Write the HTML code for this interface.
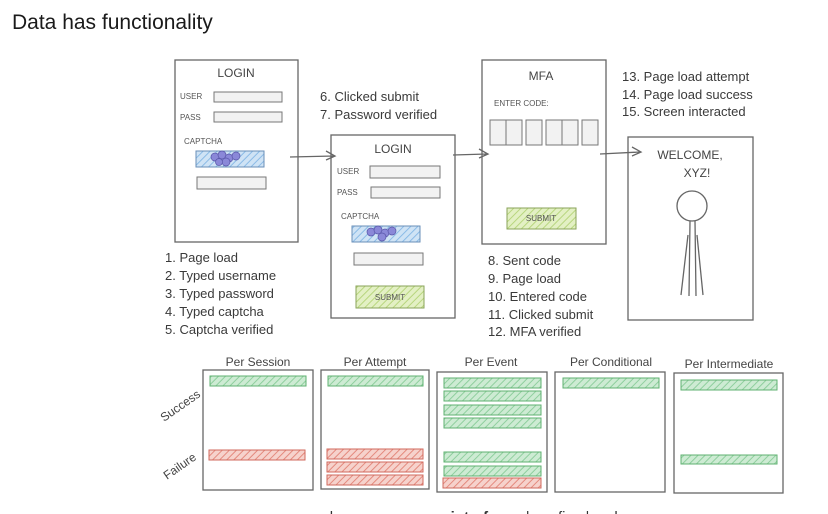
<!DOCTYPE html>
<html><head><meta charset="utf-8"><style>
html,body{margin:0;padding:0;background:#fff;width:828px;height:514px;overflow:hidden}
svg{display:block}
.t{font-family:"Liberation Sans",sans-serif;fill:#3a3a3a;font-size:13px}
.s{font-family:"Liberation Sans",sans-serif;fill:#555;font-size:8px}
.h{font-family:"Liberation Sans",sans-serif;fill:#444;font-size:12px}
.b{fill:none;stroke:#666;stroke-width:1.3}
.in{fill:#f2f2f2;stroke:#777;stroke-width:1}
</style></head><body>
<svg width="828" height="514" viewBox="0 0 828 514">
<defs>
<pattern id="g" width="5" height="5" patternUnits="userSpaceOnUse" patternTransform="rotate(45)"><rect width="5" height="5" fill="#cdebd3"/><line x1="0" y1="0" x2="0" y2="5" stroke="#8fcf9e" stroke-width="2"/></pattern>
<pattern id="r" width="5" height="5" patternUnits="userSpaceOnUse" patternTransform="rotate(45)"><rect width="5" height="5" fill="#f6d2cc"/><line x1="0" y1="0" x2="0" y2="5" stroke="#e48a7e" stroke-width="2"/></pattern>
<pattern id="y" width="5" height="5" patternUnits="userSpaceOnUse" patternTransform="rotate(45)"><rect width="5" height="5" fill="#e3f0c4"/><line x1="0" y1="0" x2="0" y2="5" stroke="#b8d67e" stroke-width="2"/></pattern>
<pattern id="bl" width="5" height="5" patternUnits="userSpaceOnUse" patternTransform="rotate(45)"><rect width="5" height="5" fill="#cfe3f5"/><line x1="0" y1="0" x2="0" y2="5" stroke="#8bbbe6" stroke-width="2"/></pattern>
</defs>
<text x="12" y="29" style="font-family:'Liberation Sans',sans-serif;font-size:21px;fill:#1a1a1a">Data has functionality</text>

<!-- Login 1 -->
<rect class="b" x="175" y="60" width="123" height="182"/>
<text class="h" x="236" y="77" text-anchor="middle">LOGIN</text>
<text class="s" x="180" y="99">USER</text><rect class="in" x="214" y="92" width="68" height="10"/>
<text class="s" x="180" y="120">PASS</text><rect class="in" x="214" y="112" width="68" height="10"/>
<text class="s" x="184" y="144">CAPTCHA</text>
<rect x="196" y="151" width="68" height="16" fill="url(#bl)" stroke="#6a8fb8"/>
<g fill="#8a88d8" stroke="#5855a8" stroke-width=".7"><circle cx="215" cy="157" r="4"/><circle cx="222" cy="155" r="4"/><circle cx="229" cy="158" r="4"/><circle cx="236" cy="156" r="4"/><circle cx="226" cy="162" r="4"/><circle cx="219" cy="162" r="3.5"/></g>
<rect class="in" x="197" y="177" width="69" height="12"/>
<path d="M290 157 L334 156 M326 151 L335 156 L326 160" class="b"/>

<text class="t" x="165" y="262">1. Page load</text>
<text class="t" x="165" y="280">2. Typed username</text>
<text class="t" x="165" y="298">3. Typed password</text>
<text class="t" x="165" y="316">4. Typed captcha</text>
<text class="t" x="165" y="334">5. Captcha verified</text>

<text class="t" x="320" y="101">6. Clicked submit</text>
<text class="t" x="320" y="119">7. Password verified</text>

<!-- Login 2 -->
<rect class="b" x="331" y="135" width="124" height="183"/>
<text class="h" x="393" y="153" text-anchor="middle">LOGIN</text>
<text class="s" x="337" y="174">USER</text><rect class="in" x="370" y="166" width="70" height="12"/>
<text class="s" x="337" y="195">PASS</text><rect class="in" x="371" y="187" width="69" height="11"/>
<text class="s" x="341" y="219">CAPTCHA</text>
<rect x="352" y="226" width="68" height="16" fill="url(#bl)" stroke="#6a8fb8"/>
<g fill="#8a88d8" stroke="#5855a8" stroke-width=".7"><circle cx="371" cy="232" r="4"/><circle cx="378" cy="230" r="4"/><circle cx="385" cy="233" r="4"/><circle cx="392" cy="231" r="4"/><circle cx="382" cy="237" r="4"/></g>
<rect class="in" x="354" y="253" width="69" height="12"/>
<rect x="356" y="286" width="68" height="22" fill="url(#y)" stroke="#8aa35a"/>
<text class="s" x="390" y="300" text-anchor="middle">SUBMIT</text>
<path d="M453 155 L487 154 M479 149 L488 154 L479 158" class="b"/>

<!-- MFA -->
<rect class="b" x="482" y="60" width="124" height="184"/>
<text class="h" x="541" y="80" text-anchor="middle">MFA</text>
<text class="s" x="494" y="106">ENTER CODE:</text>
<g class="in"><rect x="490" y="120" width="16" height="25"/><rect x="506" y="120" width="16" height="25"/><rect x="526" y="120" width="16" height="25"/><rect x="546" y="120" width="16" height="25"/><rect x="562" y="120" width="16" height="25"/><rect x="582" y="120" width="16" height="25"/></g>
<rect x="507" y="208" width="69" height="21" fill="url(#y)" stroke="#8aa35a"/>
<text class="s" x="541" y="221" text-anchor="middle">SUBMIT</text>
<path d="M600 154 L640 152 M632 147 L641 152 L632 156" class="b"/>

<text class="t" x="488" y="265">8. Sent code</text>
<text class="t" x="488" y="283">9. Page load</text>
<text class="t" x="488" y="301">10. Entered code</text>
<text class="t" x="488" y="319">11. Clicked submit</text>
<text class="t" x="488" y="336">12. MFA verified</text>

<text class="t" x="622" y="81">13. Page load attempt</text>
<text class="t" x="622" y="99">14. Page load success</text>
<text class="t" x="622" y="116">15. Screen interacted</text>

<!-- Welcome -->
<rect class="b" x="628" y="137" width="125" height="183"/>
<text class="h" x="690" y="159" text-anchor="middle">WELCOME,</text>
<text class="h" x="697" y="177" text-anchor="middle">XYZ!</text>
<circle cx="692" cy="206" r="15" class="b"/>
<path class="b" d="M690 221 L689 296 M695 221 L696 296 M688 235 L681 295 M697 235 L703 295"/>

<!-- Bottom -->
<g class="h" text-anchor="middle">
<text x="258" y="366">Per Session</text>
<text x="375" y="366">Per Attempt</text>
<text x="491" y="366">Per Event</text>
<text x="611" y="366">Per Conditional</text>
<text x="729" y="368">Per Intermediate</text>
</g>
<text class="h" transform="translate(164 422) rotate(-35)" x="0" y="0">Success</text>
<text class="h" transform="translate(167 480) rotate(-35)" x="0" y="0">Failure</text>
<rect class="b" x="203" y="370" width="110" height="120"/>
<rect class="b" x="321" y="370" width="108" height="119"/>
<rect class="b" x="437" y="372" width="110" height="120"/>
<rect class="b" x="555" y="372" width="110" height="120"/>
<rect class="b" x="674" y="373" width="109" height="120"/>
<g stroke-width="1">
<rect x="210" y="376" width="96" height="10" fill="url(#g)" stroke="#5fb070"/>
<rect x="209" y="450" width="96" height="10" fill="url(#r)" stroke="#d06a5e"/>
<rect x="328" y="376" width="95" height="10" fill="url(#g)" stroke="#5fb070"/>
<rect x="327" y="449" width="96" height="10" fill="url(#r)" stroke="#d06a5e"/>
<rect x="327" y="462" width="96" height="10" fill="url(#r)" stroke="#d06a5e"/>
<rect x="327" y="475" width="96" height="10" fill="url(#r)" stroke="#d06a5e"/>
<rect x="444" y="378" width="97" height="10" fill="url(#g)" stroke="#5fb070"/>
<rect x="444" y="391" width="97" height="10" fill="url(#g)" stroke="#5fb070"/>
<rect x="444" y="405" width="97" height="10" fill="url(#g)" stroke="#5fb070"/>
<rect x="444" y="418" width="97" height="10" fill="url(#g)" stroke="#5fb070"/>
<rect x="444" y="452" width="97" height="10" fill="url(#g)" stroke="#5fb070"/>
<rect x="444" y="466" width="97" height="10" fill="url(#g)" stroke="#5fb070"/>
<rect x="443" y="478" width="98" height="10" fill="url(#r)" stroke="#d06a5e"/>
<rect x="563" y="378" width="96" height="10" fill="url(#g)" stroke="#5fb070"/>
<rect x="681" y="380" width="96" height="10" fill="url(#g)" stroke="#5fb070"/>
<rect x="681" y="455" width="96" height="9" fill="url(#g)" stroke="#5fb070"/>
</g>
<text x="470" y="522" text-anchor="middle" style="font-family:'Liberation Sans',sans-serif;font-size:15px;fill:#333">column names are - <tspan font-weight="bold">interfaces</tspan> | configs | code</text>
</svg>
</body></html>
